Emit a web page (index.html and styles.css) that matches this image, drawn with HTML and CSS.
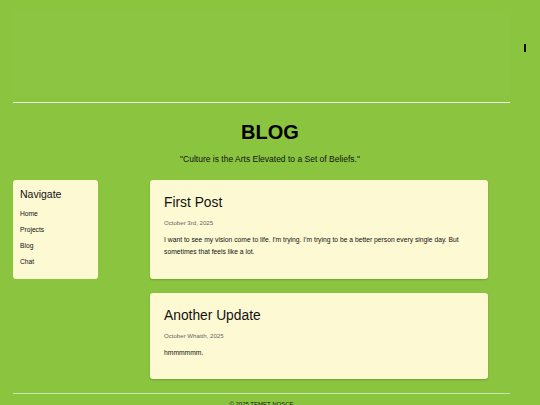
FILE: index.html
```html
<!DOCTYPE html>
<html lang="en">
<head>
<meta charset="utf-8">
<title>Blog</title>
<link rel="stylesheet" href="styles.css">
</head>
<body>
<div class="page">
  <header class="site-header">
    <div class="banner"></div>
    <span class="menu-mark"></span>
  </header>
  <hr class="rule-top">
  <div class="hero">
    <h1 class="hero-title">BLOG</h1>
    <p class="hero-quote">"Culture is the Arts Elevated to a Set of Beliefs."</p>
  </div>
  <div class="layout">
    <aside class="sidebar">
      <h2 class="sidebar-title">Navigate</h2>
      <ul class="nav-list">
        <li class="nav-item">Home</li>
        <li class="nav-item">Projects</li>
        <li class="nav-item">Blog</li>
        <li class="nav-item">Chat</li>
      </ul>
    </aside>
    <main class="posts">
      <article class="post">
        <h3 class="post-title">First Post</h3>
        <div class="post-date">October 3rd, 2025</div>
        <p class="post-body">I want to see my vision come to life. I'm trying. I'm trying to be a better person every single day. But sometimes that feels like a lot.</p>
      </article>
      <article class="post">
        <h3 class="post-title">Another Update</h3>
        <div class="post-date">October Whatth, 2025</div>
        <p class="post-body">hmmmmmm.</p>
      </article>
    </main>
  </div>
  <footer class="site-footer">
    <hr class="rule-bottom">
    <p class="footer-text">© 2025 TEMET NOSCE</p>
  </footer>
</div>
</body>
</html>
```

FILE: styles.css
```css
html, body {
  margin: 0;
  padding: 0;
}
body {
  background: #8bc540;
  font-family: "Liberation Sans", Arial, sans-serif;
  color: #111;
  width: 540px;
  height: 405px;
  overflow: hidden;
}
.page {
  position: relative;
  padding: 0 30px 0 13px;
}
.site-header {
  height: 102px;
  padding-top: 10px;
  box-sizing: border-box;
}
.banner {
  height: 85px;
  background: rgba(255, 255, 255, 0.01);
}
.menu-mark {
  position: absolute;
  left: 524px;
  top: 44px;
  width: 2px;
  height: 8px;
  background: #111;
}
.rule-top {
  margin: 0;
  border: 0;
  height: 1px;
  background: #f4fbe8;
}
.hero {
  margin-right: -30px;
  margin-left: -13px;
  text-align: center;
  padding-top: 18px;
  height: 77px;
  box-sizing: border-box;
}
.hero-title {
  margin: 0;
  font-size: 20px;
  line-height: 23px;
  font-weight: bold;
  color: #000;
}
.hero-quote {
  margin: 10px 0 0;
  font-size: 8.5px;
  line-height: 10px;
  color: #111;
}
.layout {
  display: grid;
  grid-template-columns: 85px 338px;
  column-gap: 52px;
  align-items: start;
}
.sidebar {
  background: #fdf9d3;
  border-radius: 3px;
  padding: 8px 7px 10px;
  height: 99px;
  box-sizing: border-box;
}
.sidebar-title {
  margin: 0;
  font-size: 10.5px;
  line-height: 12px;
  font-weight: normal;
  color: #111;
}
.nav-list {
  list-style: none;
  margin: 6px 0 0;
  padding: 0;
}
.nav-item {
  font-size: 6.7px;
  line-height: 15.9px;
  color: #111;
}
.posts {
  display: flex;
  flex-direction: column;
  gap: 14px;
}
.post {
  background: #fdf9d3;
  border-radius: 3px;
  padding: 15px 14px 20px;
  box-shadow: 0 1px 2px rgba(60, 90, 20, 0.35);
}
.post-title {
  margin: 0;
  font-size: 13.8px;
  line-height: 16px;
  font-weight: normal;
  color: #111;
}
.post-date {
  margin-top: 8px;
  font-size: 6.1px;
  line-height: 7px;
  color: #666;
}
.post-body {
  margin: 8px 0 0;
  font-size: 6.75px;
  line-height: 12.3px;
  color: #111;
}
.site-footer {
  margin-top: 14px;
}
.rule-bottom {
  margin: 0;
  border: 0;
  height: 1px;
  background: rgba(255, 255, 255, 0.55);
}
.footer-text {
  margin: 6px 0 0;
  text-align: center;
  font-size: 6px;
  line-height: 8px;
  color: #111;
}
```
